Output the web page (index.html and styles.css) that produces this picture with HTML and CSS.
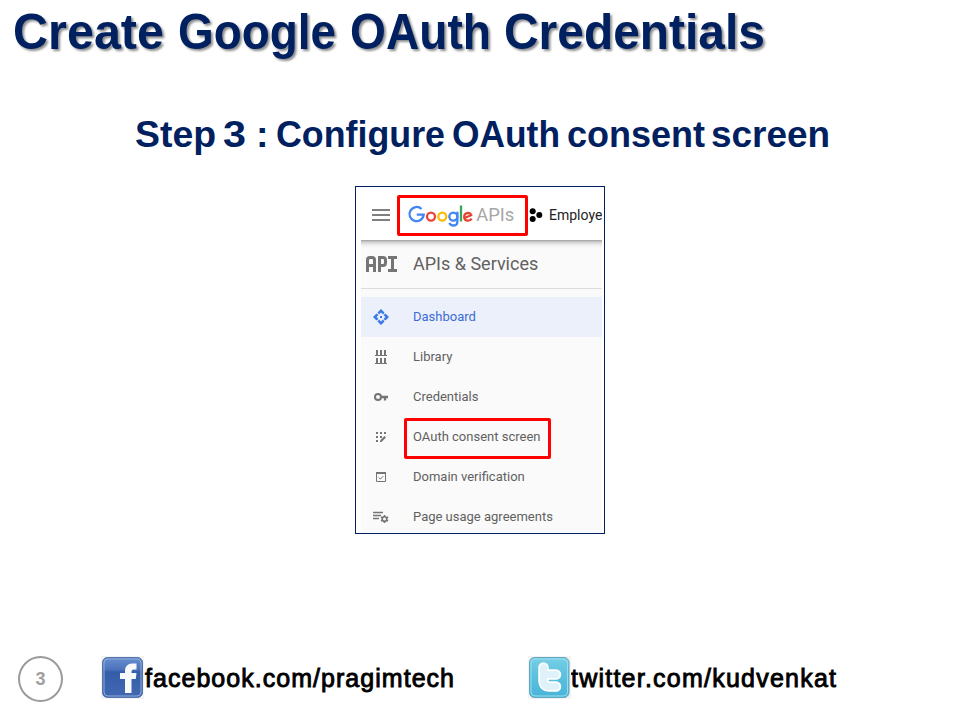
FILE: index.html
```html
<!DOCTYPE html>
<html lang="en">
<head>
<meta charset="utf-8">
<title>Create Google OAuth Credentials</title>
<link rel="stylesheet" href="styles.css">
</head>
<body>
<main class="slide">
  <h1 class="title"><svg width="960" height="80"><g lengthAdjust="spacingAndGlyphs"><text x="13" y="49" textLength="151" lengthAdjust="spacingAndGlyphs">Create</text> <text x="178" y="49" textLength="158" lengthAdjust="spacingAndGlyphs">Google</text> <text x="350" y="49" textLength="141" lengthAdjust="spacingAndGlyphs">OAuth</text> <text x="504" y="49" textLength="261" lengthAdjust="spacingAndGlyphs">Credentials</text></g></svg></h1>
  <h2 class="step"><svg width="960" height="60"><text x="135" y="47" textLength="81" lengthAdjust="spacingAndGlyphs">Step</text> <text x="223" y="47" textLength="23" lengthAdjust="spacingAndGlyphs">3</text> <text x="256" y="47">:</text> <text x="276" y="47" textLength="169" lengthAdjust="spacingAndGlyphs">Configure</text> <text x="452" y="47" textLength="108" lengthAdjust="spacingAndGlyphs">OAuth</text> <text x="567" y="47" textLength="138" lengthAdjust="spacingAndGlyphs">consent</text> <text x="711" y="47" textLength="119" lengthAdjust="spacingAndGlyphs">screen</text></svg></h2>

  <section class="shot">
    <div class="console">
      <header class="bar">
        <svg class="burger" width="18" height="12"><path d="M0 1h18M0 6h18M0 11h18" stroke="#555" stroke-width="1.600"/></svg>
        <div class="logo">
          <svg width="110" height="32" viewBox="0 0 110 32" fill="none" stroke-width="2.300">
            <path d="M17.600 10A7.100 7.100 0 1 0 19.700 15.700H12.800" stroke="#4285f4"/>
            <circle cx="27" cy="17.600" r="4" stroke="#ea4335"/>
            <circle cx="38.300" cy="17.600" r="4" stroke="#fbbc05"/>
            <circle cx="49.300" cy="17.600" r="4" stroke="#4285f4"/>
            <path d="M53.400 12.800v9.700c0 5-6.500 5.200-8 1.300" stroke="#4285f4"/>
            <path d="M57 6.500v16" stroke="#34a853"/>
            <path d="M60.500 19l6.700-2.800c-1.200-3.300-7-3-7 1.600 0 4.600 5.500 5 7.400 1.800" stroke="#ea4335"/>
            <text class="apis" x="72.300" y="22" textLength="38" lengthAdjust="spacingAndGlyphs">APIs</text>
          </svg>
        </div>
        <svg class="project-icon" width="14" height="14"><circle cx="3.700" cy="3.300" r="3"/><circle cx="10.300" cy="7.100" r="3"/><circle cx="3.700" cy="11" r="3"/></svg>
        <span class="project">Employe</span>
      </header>
      <div class="section">
        <svg class="api" width="32" height="16" fill="none" stroke="#757575" stroke-width="3"><path d="M1.500 16V4q0-2.500 2.500-2.500h2q2.500 0 2.500 2.500v12M1.500 9.500h7M13.500 16V1.500H17q2.500 0 2.500 2.500v3q0 2.500-2.500 2.500h-3.500M22 1.500h9M26.500 1.500v13M22 14.500h9"/></svg>
        <span>APIs &amp; Services</span>
      </div>
      <nav class="menu">
        <div class="item active"><span class="icon"><svg width="16" height="16" fill="#3b78e7"><path d="M8 0l3.500 3.500-1.500 2L8 3.600 6 5.500l-1.500-2zM16 8l-3.500 3.500-2-1.500L12.400 8l-1.900-2 2-1.500zM8 16l-3.500-3.500 1.500-2 2 1.900 2-1.900 1.500 2zM0 8l3.500-3.500 2 1.500L3.600 8l1.900 2-2 1.500z"/><path d="M7 7h2v2H7z"/></svg></span><span class="label">Dashboard</span></div>
        <div class="item"><span class="icon"><svg width="12" height="14" stroke="#757575" fill="none"><path d="M0 5.500h12M0 13.500h12"/><path d="M2 0v5M6 0v5M10 0v5M2 8v5M6 8v5M10 8v5" stroke-width="2"/></svg></span><span class="label">Library</span></div>
        <div class="item"><span class="icon"><svg width="14" height="8" fill="none" stroke="#757575" stroke-width="2"><circle cx="4" cy="4" r="3"/><path d="M7 4h7M11 4v3.500" stroke-width="2.300"/></svg></span><span class="label">Credentials</span></div>
        <div class="item"><span class="icon"><svg width="12" height="12" fill="#757575"><path d="M1 1h2v2H1zM5 1h2v2H5zM9 1h2v2H9zM1 5h2v2H1zM5 5h2v2H5zM1 9h2v2H1z"/><path d="M5 9.500l4.500-4.500 1.500 1.500L6.500 11H5z"/></svg></span><span class="label">OAuth consent screen</span></div>
        <div class="item"><span class="icon"><svg width="10" height="10" fill="none" stroke="#757575"><path d="M.5 .5h9v9h-9z"/><path d="M0 1h10" stroke-width="2"/><path d="M2.700 5.500l1.600 1.600 3-3"/></svg></span><span class="label">Domain verification</span></div>
        <div class="item"><span class="icon"><svg width="16" height="12" fill="none" stroke="#757575"><path d="M0 1.500h10M0 4.500h8M0 7.500h6" stroke-width="1.300"/><circle cx="11.500" cy="8" r="2.300" stroke-width="1.600"/><path d="M11.500 4v1.500M11.500 10.500v1.500M8 6l1.300.8M13.700 9.200l1.300.8M8 10l1.300-.8M13.700 6.800l1.300-.8" stroke-width="1.600"/></svg></span><span class="label">Page usage agreements</span></div>
      </nav>
    </div>
    <span class="mark mark-logo"></span>
    <span class="mark mark-consent"></span>
  </section>

  <footer class="footer">
    <span class="page">3</span>
    <svg class="social" width="43" height="43">
      <defs>
        <linearGradient id="fb" x2="0" y2="1"><stop offset="0" stop-color="#668fce"/><stop offset=".3" stop-color="#4d72bc"/><stop offset=".36" stop-color="#345da8"/><stop offset="1" stop-color="#4168b3"/></linearGradient>
        <linearGradient id="tw" x2="0" y2="1"><stop offset="0" stop-color="#78cfe6"/><stop offset=".4" stop-color="#5ec2df"/><stop offset="1" stop-color="#49b4d8"/></linearGradient>
      </defs>
      <path d="M0 0h43v43H0z" fill="#f3f3f3"/>
      <rect x="1.500" y="1.500" width="40" height="40" rx="5" fill="url(#fb)" stroke="#5373ad"/>
      <rect x="3" y="3" width="37" height="37" rx="4" fill="none" stroke="#91abd8"/>
      <path d="M24 37V23h-5v-6h5v-2c0-5 3-7.500 8-7.500h3.500v6H33c-2 0-2.500 1-2.500 2.500v1h5l-.7 6h-4.300v14z" fill="#f8f9fb"/>
    </svg>
    <svg class="link link-facebook" width="314" height="43"><text x="1" y="31" textLength="309">facebook.com/pragimtech</text></svg>
    <svg class="social social-twitter" width="43" height="43">
      <path d="M0 0h43v43H0z" fill="#f3f3f3"/>
      <rect x="1.500" y="1.500" width="39.500" height="40" rx="5" fill="url(#tw)" stroke="#60a8bf"/>
      <rect x="3" y="3" width="36.500" height="37" rx="4" fill="none" stroke="#9added"/>
      <path d="M15.500 11.500v13q0 6 6 6H28M16 18.500h12" fill="none" stroke="#fff" stroke-width="10.500" stroke-linecap="round"/>
      <path d="M15.500 11.500v13q0 6 6 6H28M16 18.500h12" fill="none" stroke="#dff2fa" stroke-width="7" stroke-linecap="round"/>
    </svg>
    <svg class="link" width="270" height="43"><text x="0" y="31" textLength="265">twitter.com/kudvenkat</text></svg>
  </footer>
</main>
</body>
</html>
```
FILE: styles.css
```css
* { box-sizing: border-box; }
body { margin: 0; background: #fff; font-family: "Liberation Sans", Arial, sans-serif; }
svg { display: block; flex: none; }
.slide { width: 960px; height: 720px; display: flex; flex-direction: column; overflow: hidden; }
.title, .step { margin: 0; }
.title { height: 100px; font-size: 50px; }
.title text { fill: #002060; filter: drop-shadow(2px 2px 1.2px rgba(0, 0, 0, .45)); }
.step { height: 86px; font-size: 37.5px; }
.step text { fill: #002060; }

.shot { position: relative; width: 250px; height: 348px; margin-left: 355px; border: 1px solid #002060; padding: 5px 2px 1px 5px; flex: none; }
.console { height: 100%; overflow: hidden; background: #fafafa; font-family: Roboto, sans-serif; }
.bar { height: 48px; display: flex; align-items: center; background: #fff; padding-left: 11px; white-space: nowrap; }
.burger { margin-top: -2px; }
.logo { margin-left: 14px; }
.logo svg { margin-top: -2px; overflow: visible; }
.apis { font-size: 18.5px; font-weight: 400; fill: #a6a6a6; stroke: none; }
.project-icon { margin: -2px 6px 0 15px; }
.project { font-size: 14px; color: #222; letter-spacing: 0; margin-top: -3px; }
.section { height: 49px; display: flex; align-items: center; gap: 15px; padding-left: 5px; border-bottom: 1px solid #dcdcdc; font-size: 18px; color: #616161; background: linear-gradient(#a0a0a0, #cecece 2px, #eee 5px, #fafafa 8px); }
.section span { margin-top: -2px; }
.menu { padding-top: 8px; }
.item { height: 40px; display: flex; align-items: center; font-size: 13px; color: #616161; }
.label { margin-top: -2px; }
.active { background: #ecf0fb; color: #3b6bd6; }
.icon { width: 40px; margin-right: 12px; display: flex; justify-content: center; }
.mark { position: absolute; border: 3px solid #f00; border-radius: 2px; }
.mark-logo { left: 41px; top: 8px; width: 131px; height: 41px; }
.mark-consent { left: 48px; top: 231px; width: 147px; height: 41px; }

.footer { margin-top: 122px; display: flex; align-items: flex-start; }
.page { width: 45px; height: 46px; margin-left: 18px; border: 2px solid #9b9b9b; border-radius: 50%; display: flex; align-items: center; justify-content: center; font-size: 18px; font-weight: bold; color: #a0a0a0; }
.social { margin-left: 38px; }
.social-twitter { margin-left: 70px; }
.link { font-size: 25px; }
.link text { fill: #000; stroke: #000; stroke-width: .9px; }
```
